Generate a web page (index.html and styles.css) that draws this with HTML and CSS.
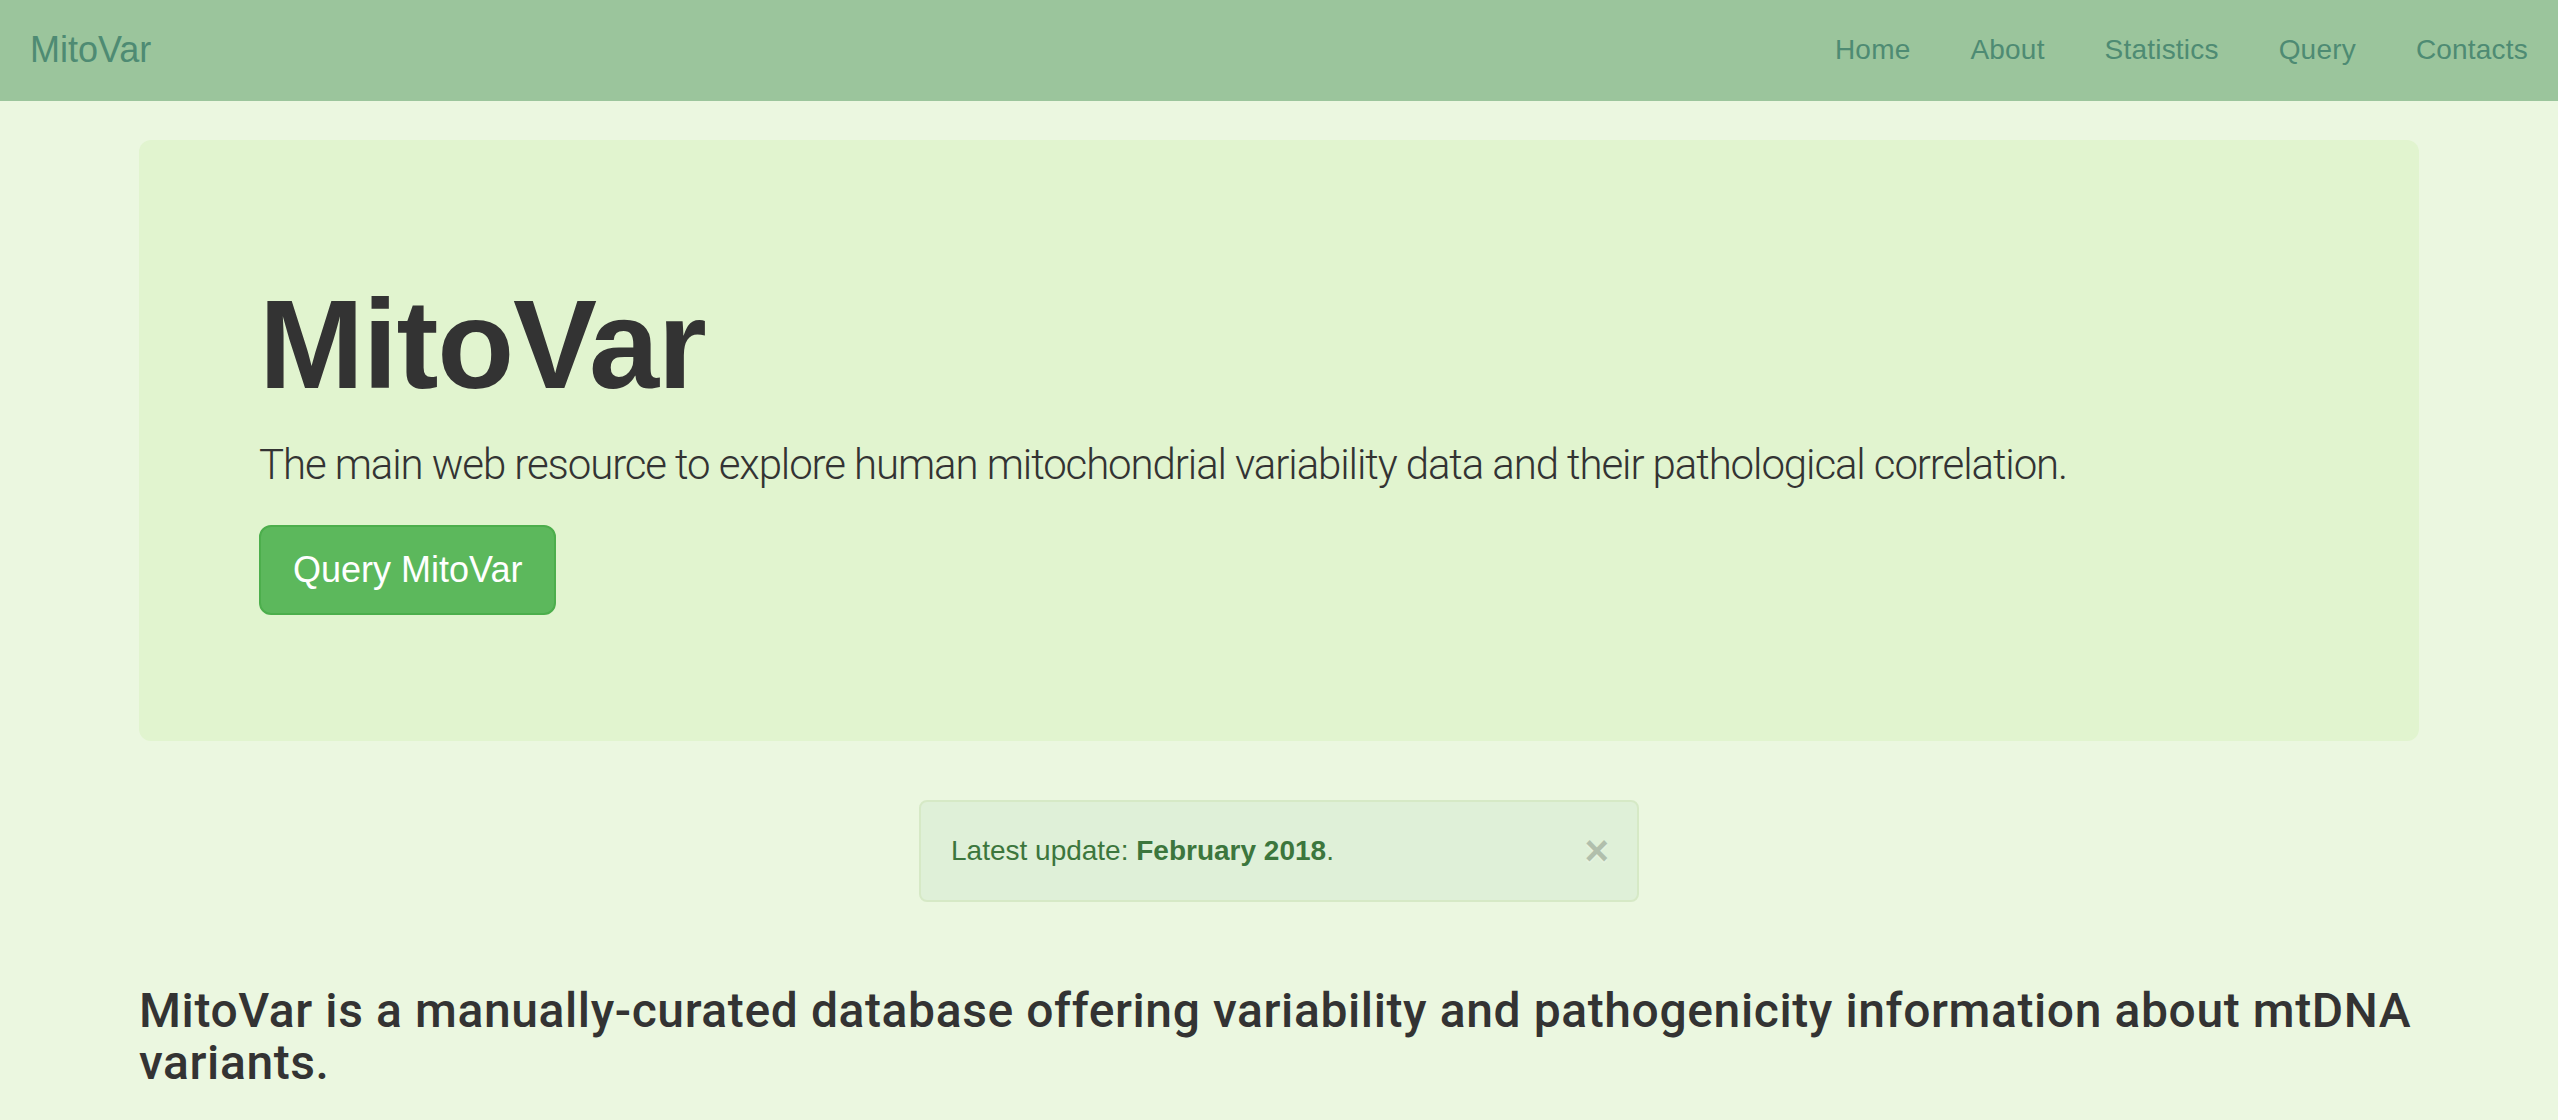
FILE: index.html
```html
<!DOCTYPE html>
<html lang="en">
<head>
<meta charset="utf-8">
<title>MitoVar</title>
<link rel="stylesheet" href="styles.css">
</head>
<body>
<nav class="navbar">
  <a class="brand" href="#">MitoVar</a>
  <ul class="nav">
    <li><a href="#">Home</a></li>
    <li><a href="#">About</a></li>
    <li><a href="#">Statistics</a></li>
    <li><a href="#">Query</a></li>
    <li><a href="#">Contacts</a></li>
  </ul>
</nav>
<div class="container">
  <div class="jumbotron">
    <h1 class="title">MitoVar</h1>
    <p class="lead">The main web resource to explore human mitochondrial variability data and their pathological correlation.</p>
    <p class="btn-row"><a class="btn" href="#">Query MitoVar</a></p>
  </div>
  <div class="alert-row">
    <div class="alert">
      <span class="alert-text">Latest update: <strong>February 2018</strong>.</span>
      <span class="close">×</span>
    </div>
  </div>
  <h3 class="intro">MitoVar is a manually-curated database offering variability and pathogenicity information about mtDNA variants.</h3>
</div>
</body>
</html>
```
FILE: styles.css
```css
* { box-sizing: border-box; }
html, body { margin: 0; padding: 0; }
body {
  background: #ebf7e0;
  color: #333;
  font-family: "Liberation Sans", Arial, sans-serif;
  font-size: 28px;
  line-height: 1.42857;
  overflow: hidden;
}
a { text-decoration: none; }

.navbar {
  display: flex;
  justify-content: space-between;
  align-items: flex-start;
  height: 101px;
  background: #9bc59c;
  padding-left: 30px;
  margin-bottom: 39px;
}
.brand {
  color: #4e8b73;
  font-size: 36px;
  line-height: 40px;
  padding: 30px 0;
}
.nav {
  display: flex;
  list-style: none;
  margin: 0;
  padding: 0;
}
.nav a {
  display: block;
  color: #4e8b73;
  font-size: 28px;
  line-height: 40px;
  padding: 30px 30px;
  letter-spacing: 0.2px;
}

.container {
  width: 2280px;
  margin: 0 auto;
}
.jumbotron {
  background: #e1f4cf;
  border-radius: 12px;
  padding: 96px 120px;
  margin-bottom: 59px;
}
.title {
  font-size: 126px;
  font-weight: bold;
  line-height: 1.1;
  margin: 40px 0 20px;
  color: #333;
  letter-spacing: -1.2px;
}
.lead {
  font-family: Roboto, "Liberation Sans", sans-serif;
  font-weight: 300;
  font-size: 42px;
  line-height: 60px;
  margin: 0 0 30px;
  color: #333;
  letter-spacing: -1.1px;
}
.btn-row {
  margin: 0 0 30px;
  font-size: 42px;
  line-height: 60px;
}
.btn {
  display: inline-block;
  background: #5cb85c;
  border: 2px solid #4cae4c;
  color: #fff;
  font-size: 36px;
  line-height: 48px;
  padding: 19px 32px;
  border-radius: 12px;
  vertical-align: middle;
}

.alert-row {
  display: flex;
  justify-content: center;
}
.alert {
  width: 720px;
  display: flex;
  justify-content: space-between;
  align-items: flex-start;
  background: #dff0d8;
  border: 2px solid #d6e9c6;
  border-radius: 8px;
  color: #3c763d;
  padding: 29px 28px 29px 30px;
  font-size: 28px;
  line-height: 40px;
  margin-bottom: 43px;
}
.alert strong { font-weight: bold; }
.close {
  font-size: 42px;
  font-weight: bold;
  line-height: 40px;
  color: #000;
  opacity: 0.2;
  text-shadow: 0 2px 0 #fff;
}

.intro {
  font-family: Roboto, "Liberation Sans", sans-serif;
  font-size: 48px;
  font-weight: 500;
  line-height: 1.1;
  margin: 40px 0 20px;
  color: #333;
  letter-spacing: 0.6px;
}
```
